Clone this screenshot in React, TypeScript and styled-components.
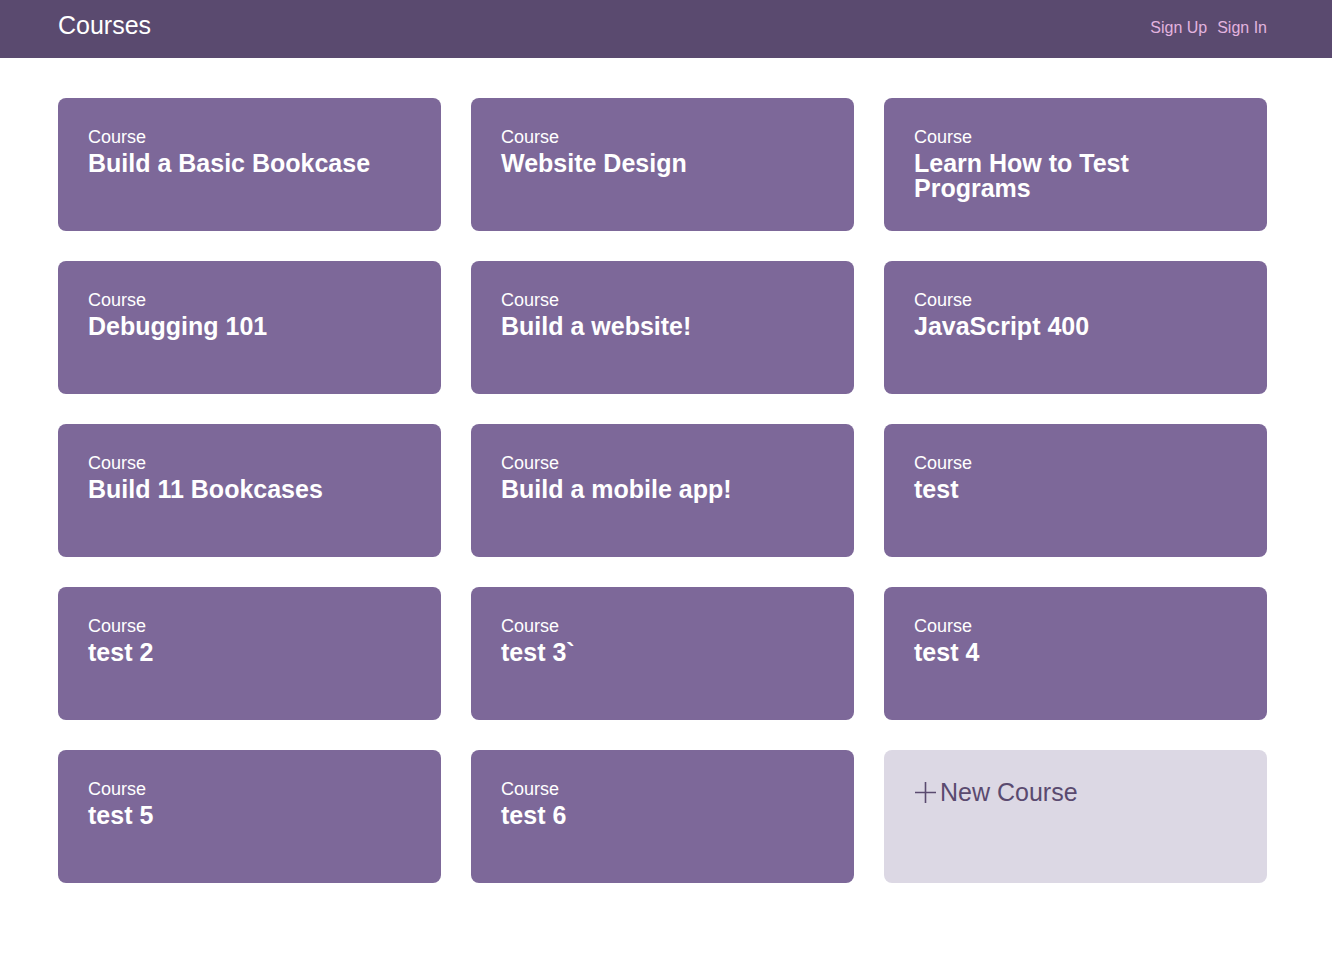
import styled, { createGlobalStyle } from "styled-components"

type course = {
  id: number
  title: string
}

const courses: course[] = [
  { id: 1, title: "Build a Basic Bookcase" },
  { id: 2, title: "Website Design" },
  { id: 3, title: "Learn How to Test Programs" },
  { id: 4, title: "Debugging 101" },
  { id: 5, title: "Build a website!" },
  { id: 6, title: "JavaScript 400" },
  { id: 7, title: "Build 11 Bookcases" },
  { id: 8, title: "Build a mobile app!" },
  { id: 9, title: "test" },
  { id: 10, title: "test 2" },
  { id: 11, title: "test 3`" },
  { id: 12, title: "test 4" },
  { id: 13, title: "test 5" },
  { id: 14, title: "test 6" },
]

const GlobalStyle = createGlobalStyle`
	* {
		box-sizing: border-box;
	}
	body {
		margin: 0;
		font-family: "Liberation Sans", Arial, sans-serif;
		background: #fff;
	}
`

export default function App() {
  return (
    <>
      <GlobalStyle />
      <Header>
        <HeaderInner>
          <Logo>Courses</Logo>
          <Nav>
            <NavLink href="#">Sign Up</NavLink>
            <NavLink href="#">Sign In</NavLink>
          </Nav>
        </HeaderInner>
      </Header>
      <Grid>
        {
          courses.map((item: course) => {
            return (
              <Card key={item.id} href="#">
                <Label>Course</Label>
                <Title>{item.title}</Title>
              </Card>
            )
          }
          )}
        <NewCard href="#">
          <NewTitle>
            <svg width="23" height="23" viewBox="0 0 23 23" fill="none" stroke="currentColor" strokeWidth="1.6">
              <path d="M11.5 1v21M1 11.5h21" />
            </svg>
            New Course
          </NewTitle>
        </NewCard>
      </Grid>
    </>
  )
}

const Header = styled.header`
	background: #5a4a6f;
	height: 58px;
`
const HeaderInner = styled.div`
	width: 1209px;
	margin-left: 58px;
	height: 100%;
	display: flex;
	align-items: flex-start;
	justify-content: space-between;
`
const Logo = styled.h1`
	margin: 11px 0 0;
	font-size: 25px;
	font-weight: 400;
	color: #fff;
	line-height: 29px;
`
const Nav = styled.nav`
	display: flex;
	gap: 10px;
	margin-top: 19px;
`
const NavLink = styled.a`
	color: #e2b3df;
	font-size: 16px;
	text-decoration: none;
	line-height: 18px;
`
const Grid = styled.main`
	width: 1209px;
	margin: 40px 0 0 58px;
	display: grid;
	grid-template-columns: repeat(3, 383px);
	grid-auto-rows: 133px;
	gap: 30px;
`
const Card = styled.a`
	display: block;
	background: #7d6899;
	border-radius: 8px;
	padding: 29px 30px;
	color: #fff;
	text-decoration: none;
`
const Label = styled.div`
	font-size: 18px;
	line-height: 20px;
`
const Title = styled.h3`
	margin: 4px 0 0;
	font-size: 25px;
	font-weight: 700;
	line-height: 25px;
	max-width: 300px;
`
const NewCard = styled(Card)`
	background: #dcd8e4;
	color: #5a4a6f;
	padding-top: 28px;
`
const NewTitle = styled.div`
	display: flex;
	align-items: center;
	gap: 3px;
	font-size: 25px;
	line-height: 28px;
`
